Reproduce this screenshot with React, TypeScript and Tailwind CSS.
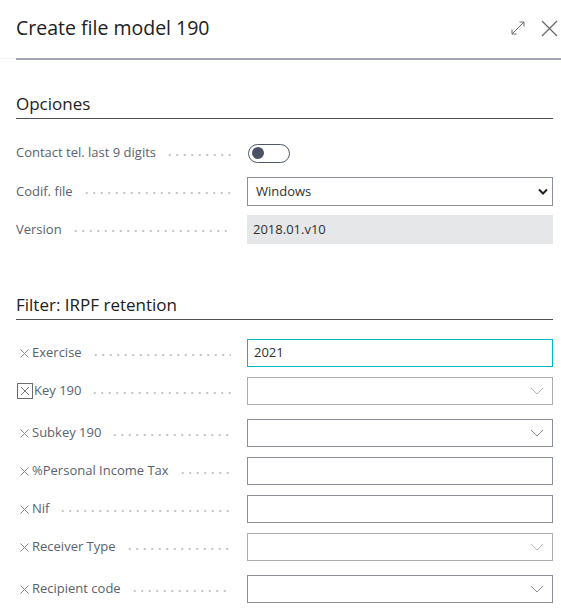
import React from "react";

const font = { fontFamily: '"Open Sans", "Noto Sans", sans-serif' };

function Dots() {
  return (
    <span className="flex-1 h-[2px] mt-[3px] ml-[10px] mr-[16px] bg-[radial-gradient(circle,#c2c2c2_0.9px,transparent_1.1px)] bg-[length:7.5px_2px] bg-repeat-x" />
  );
}

function ClearX({ boxed }: { boxed?: boolean }) {
  if (boxed) {
    return (
      <span className="w-[16px] h-[16px] border border-[#6b6b6b] flex items-center justify-center mr-[1px] ml-[1px]">
        <svg width="10" height="10" viewBox="0 0 10 10" stroke="#7a7a7a" strokeWidth="1">
          <path d="M1 1L9 9M9 1L1 9" />
        </svg>
      </span>
    );
  }
  return (
    <span className="w-[16px] flex items-center justify-start pl-[4px]">
      <svg width="9" height="9" viewBox="0 0 9 9" stroke="#8a8a8a" strokeWidth="1">
        <path d="M0.5 0.5L8.5 8.5M8.5 0.5L0.5 8.5" />
      </svg>
    </span>
  );
}

function Chevron({ light }: { light?: boolean }) {
  return (
    <svg width="14" height="8" viewBox="0 0 14 8" fill="none" stroke={light ? "#b5b5b5" : "#8f8f8f"} strokeWidth="1">
      <path d="M1 1L7 7L13 1" />
    </svg>
  );
}

function Row({
  label,
  x,
  boxed,
  children,
  className = "",
}: {
  label: string;
  x?: boolean;
  boxed?: boolean;
  children: React.ReactNode;
  className?: string;
}) {
  return (
    <div className={"flex items-center pr-2 " + className}>
      <div className="w-[247px] flex items-center text-[13px] text-[#5a626d] pl-4">
        {x && <ClearX boxed={boxed} />}
        <span className="whitespace-nowrap">{label}</span>
        <Dots />
      </div>
      <div className="flex-1">{children}</div>
    </div>
  );
}

function TextBox({ value, active }: { value?: string; active?: boolean }) {
  return (
    <div
      className={
        "h-[28px] border flex items-center px-[6px] text-[13px] text-[#303030] " +
        (active ? "border-[#00b7c3]" : "border-[#8a8f98]")
      }
    >
      {value}
    </div>
  );
}

function LookupBox({ light }: { light?: boolean }) {
  return (
    <div
      className={
        "h-[28px] border flex items-center justify-end pr-[8px] " +
        (light ? "border-[#adadad]" : "border-[#8a8f98]")
      }
    >
      <Chevron light={light} />
    </div>
  );
}

export default function App() {
  return (
    <div className="w-[561px] h-[611px] bg-white overflow-hidden text-[#212121]" style={font}>
      <div className="flex">
        <div className="w-4 h-[59px] border-b border-[#f3f3f3]" />
        <div className="flex-1 h-[60px] border-b-2 border-[#a3a6b1] flex items-center justify-between pb-[2px]">
          <h1 className="text-[19.5px] text-[#212121]">Create file model 190</h1>
          <div className="flex items-center gap-[15px] pr-[3px]">
            <svg width="16" height="16" viewBox="0 0 16 16" fill="none" stroke="#6a6a6a" strokeWidth="1">
              <path d="M2 14L14 2M9.5 2H14V6.5M2 9.5V14H6.5" />
            </svg>
            <svg width="17" height="17" viewBox="0 0 17 17" fill="none" stroke="#6a6a6a" strokeWidth="1.3">
              <path d="M1 1L16 16M16 1L1 16" />
            </svg>
          </div>
        </div>
      </div>

      <div className="ml-4 mr-2 mt-[32px] border-b border-[#505050] pb-[2px]">
        <h2 className="text-[17px] leading-[24px]">Opciones</h2>
      </div>

      <Row label="Contact tel. last 9 digits" className="mt-[20px] h-[28px]">
        <div className="w-[42px] h-[19px] ml-[1px] rounded-full border border-[#4e5666] flex items-center pl-[3px]">
          <span className="w-[12px] h-[12px] rounded-full bg-[#4a5264]" />
        </div>
      </Row>

      <Row label="Codif. file" className="mt-[10px]">
        <div className="h-[29px] border border-[#8a8f98] flex items-center justify-between pl-[8px] pr-[4px] text-[13px] text-[#303030]">
          <span>Windows</span>
          <svg width="10" height="7" viewBox="0 0 10 7" fill="none" stroke="#222" strokeWidth="2">
            <path d="M1 1.5L5 5.5L9 1.5" />
          </svg>
        </div>
      </Row>

      <Row label="Version" className="mt-[9px]">
        <div className="h-[29px] bg-[#e6e7e9] flex items-center px-[6px] text-[13px] text-[#303030]">2018.01.v10</div>
      </Row>

      <div className="ml-4 mr-2 mt-[49px] border-b border-[#505050] pb-[2px]">
        <h2 className="text-[17px] leading-[24px]">Filter: IRPF retention</h2>
      </div>

      <Row label="Exercise" x className="mt-[19px]">
        <TextBox value="2021" active />
      </Row>
      <Row label="Key 190" x boxed className="mt-[10px]">
        <LookupBox light />
      </Row>
      <Row label="Subkey 190" x className="mt-[14px]">
        <LookupBox />
      </Row>
      <Row label="%Personal Income Tax" x className="mt-[10px]">
        <TextBox />
      </Row>
      <Row label="Nif" x className="mt-[10px]">
        <TextBox />
      </Row>
      <Row label="Receiver Type" x className="mt-[10px]">
        <LookupBox light />
      </Row>
      <Row label="Recipient code" x className="mt-[14px]">
        <LookupBox />
      </Row>
    </div>
  );
}
